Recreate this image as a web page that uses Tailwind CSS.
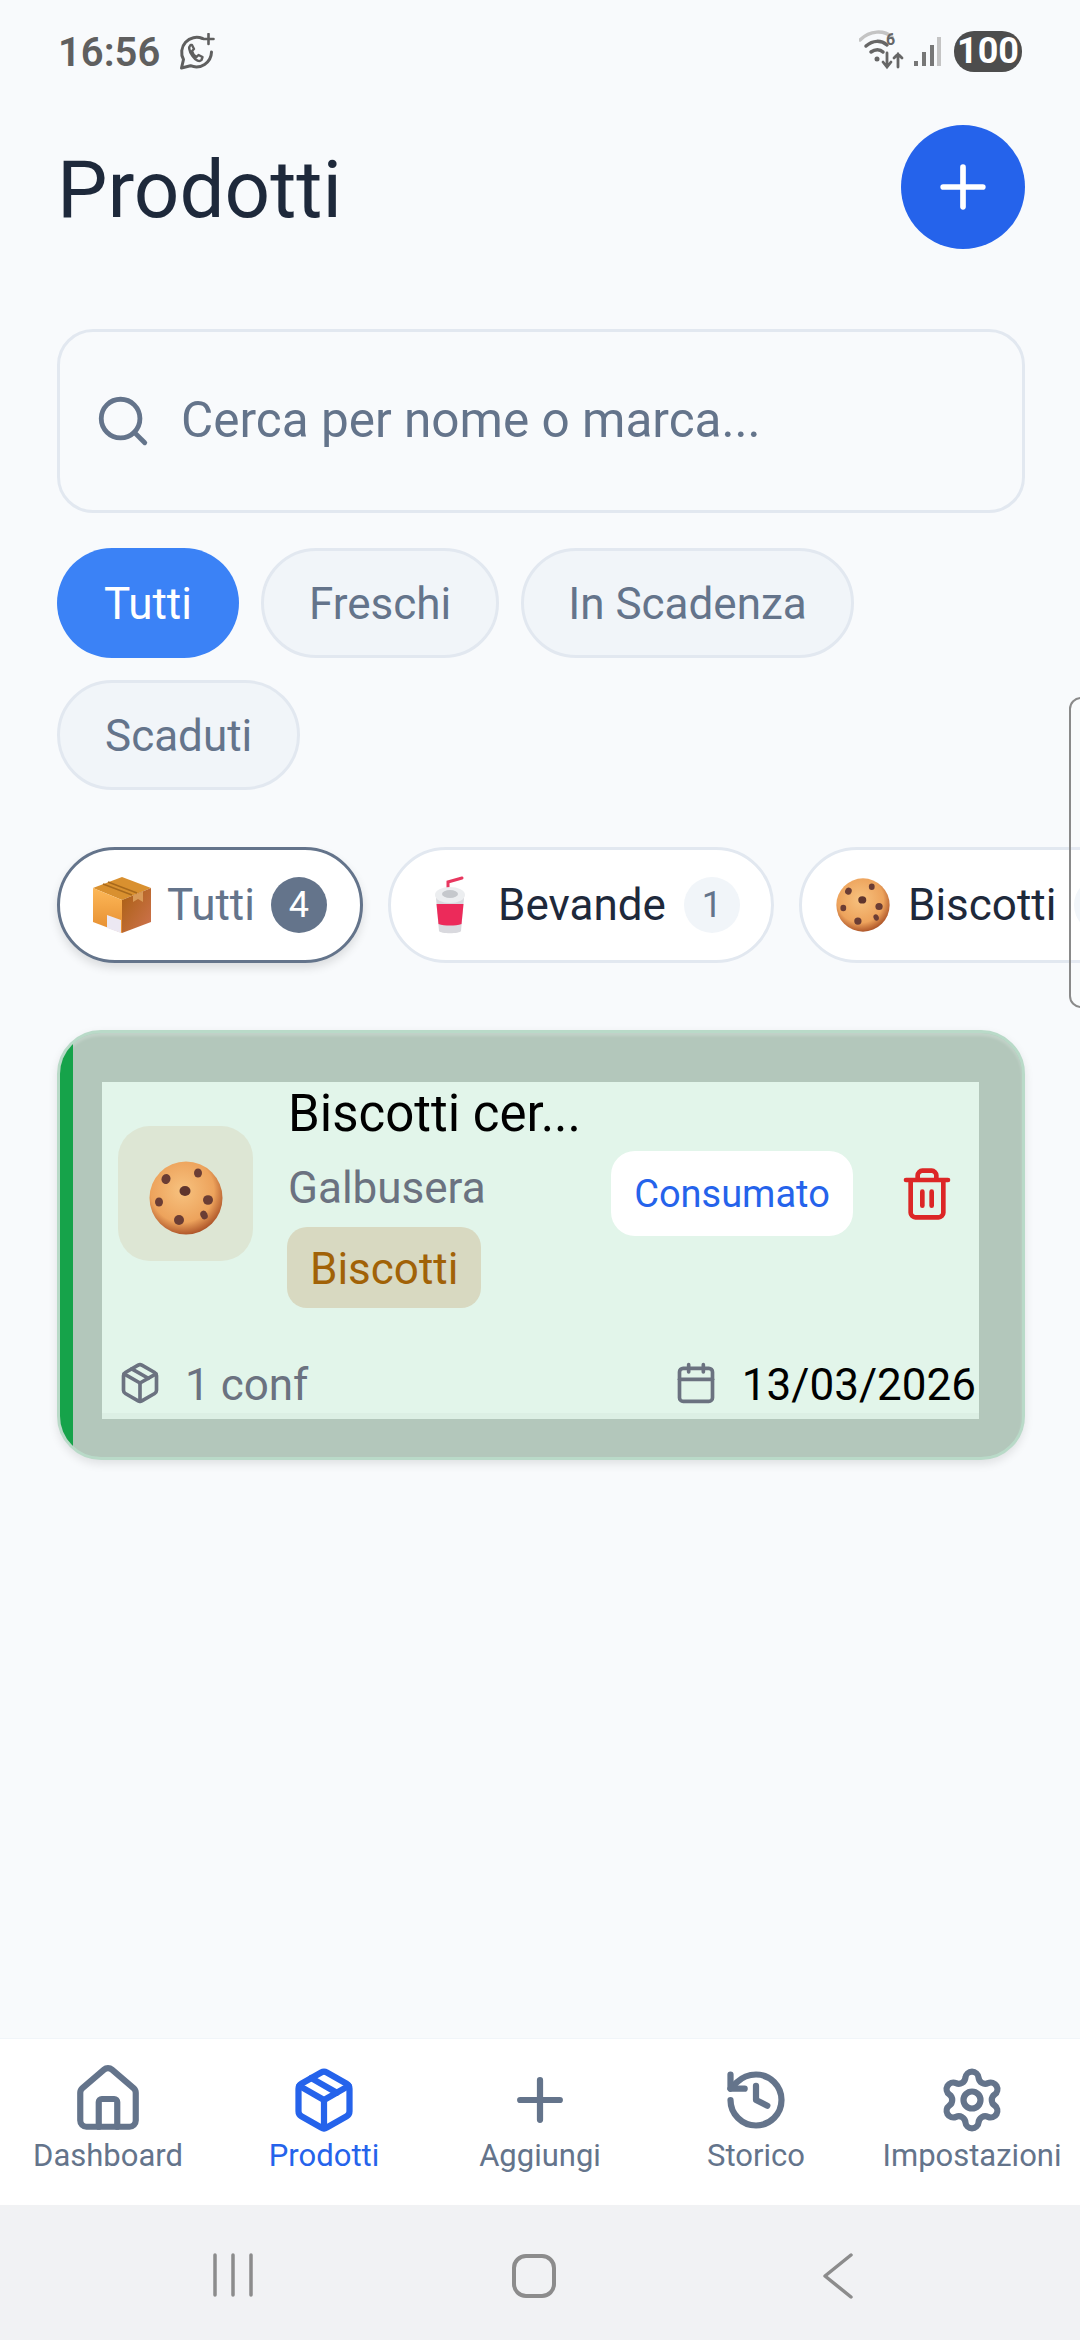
<!DOCTYPE html>
<html lang="it">
<head>
    <meta charset="UTF-8">
    <meta name="viewport" content="width=device-width, initial-scale=1.0">
    <title>Prodotti</title>
    <script src="https://cdn.jsdelivr.net/npm/@tailwindcss/browser@4"></script>
</head>
<body>
    <!-- shared emoji drawings -->
    <svg class="absolute w-0 h-0">
        <defs>
            <radialGradient id="cookieFill" cx="45%" cy="40%" r="62%">
                <stop offset="0%" stop-color="#f7c27f"/>
                <stop offset="70%" stop-color="#eda35c"/>
                <stop offset="100%" stop-color="#a94f25"/>
            </radialGradient>
            <linearGradient id="boxLeft" x1="0" y1="0" x2="0" y2="1">
                <stop offset="0%" stop-color="#fdb858"/>
                <stop offset="100%" stop-color="#e58c2e"/>
            </linearGradient>
            <linearGradient id="boxRight" x1="0" y1="0" x2="1" y2="1">
                <stop offset="0%" stop-color="#a95f10"/>
                <stop offset="100%" stop-color="#cf7350"/>
            </linearGradient>
        </defs>
        <symbol id="cookie" viewBox="0 0 74 74">
            <circle cx="37" cy="37" r="36.5" fill="url(#cookieFill)"/>
            <ellipse cx="17" cy="18" rx="4.5" ry="5" fill="#6b3d34" transform="rotate(20 17 18)"/>
            <ellipse cx="49" cy="12" rx="4" ry="4.5" fill="#6b3d34"/>
            <ellipse cx="36" cy="30" rx="5.5" ry="5" fill="#5f352d"/>
            <ellipse cx="10" cy="41" rx="4" ry="4.5" fill="#6b3d34"/>
            <ellipse cx="59" cy="39" rx="5" ry="4.8" fill="#6b3d34"/>
            <ellipse cx="30" cy="59" rx="5" ry="5" fill="#6b3d34"/>
            <ellipse cx="55" cy="54" rx="3.5" ry="4.5" fill="#6b3d34" transform="rotate(-25 55 54)"/>
        </symbol>
    </svg>

    <div class="relative w-[1080px] h-[2340px] overflow-hidden bg-[#f8fafc] flex flex-col [font-family:Roboto,sans-serif]">

        <!-- status bar -->
        <div class="h-[125px] flex items-start justify-between pl-[58px] pr-[58px] pt-[31px]">
            <div class="flex items-center gap-[18px] h-[42px]">
                <span class="text-[40px] leading-[42px] font-semibold text-[#5f5f5f] mt-[2px]">16:56</span>
                <svg class="w-[38px] h-[38px]" viewBox="0 0 37 38" fill="none" stroke="#5f5f5f" stroke-width="3" stroke-linecap="round" stroke-linejoin="round">
                    <path d="M24 5.5a15 15 0 0 0-19 21L3 35l9-2.3A15.2 15.2 0 0 0 33 19"/>
                    <path d="M12 12c-2 2-1.500 6 2 11s7 6 9 4l1-3-4-2-2 2c-2-1-4-4-4.500-6l2-2-2-4z" stroke-width="2.400"/>
                    <path d="M30 1v10M25 6h10" stroke-width="2.600"/>
                </svg>
            </div>
            <div class="flex items-center h-[41px]">
                <svg class="w-[46px] h-[46px]" viewBox="0 0 46 46" fill="none" stroke-linecap="round">
                    <path d="M1 11C11 1 25 1 33 8" stroke="#c4c4c4" stroke-width="3.500"/>
                    <path d="M7 17c7-6 15-6 21-1" stroke="#666" stroke-width="3.500"/>
                    <path d="M12 23c4-3 9-3 12 0" stroke="#666" stroke-width="3.500"/>
                    <circle cx="18" cy="30" r="2.500" fill="#666"/>
                    <path d="M28 24v13M24 33l4 5 4-5M39 38V25M35 29l4-4 4 4" stroke="#666" stroke-width="2.800"/>
                    <text x="27" y="16" font-size="16" font-weight="700" fill="#666" font-family="Roboto">6</text>
                </svg>
                <svg class="w-[28px] h-[30px] ml-[8px]" viewBox="0 0 28 30" fill="none" stroke-width="4">
                    <path d="M3 24v5" stroke="#777"/>
                    <path d="M11 15v14" stroke="#777"/>
                    <path d="M19 8v21" stroke="#777"/>
                    <path d="M26 0v29" stroke="#c4c4c4"/>
                </svg>
                <div class="ml-[13px] w-[68px] h-[41px] rounded-[20px] bg-[#4d4d4d] text-white text-[36px] leading-[41px] font-bold text-center">100</div>
            </div>
        </div>

        <!-- header -->
        <div class="h-[124px] flex items-center justify-between pl-[57px] pr-[55px]">
            <h1 class="text-[80px] leading-none font-normal text-[#1e293b] mt-[5px]">Prodotti</h1>
            <button class="w-[124px] h-[124px] rounded-full bg-[#2563eb] flex items-center justify-center">
                <svg class="w-[68px] h-[68px]" viewBox="0 0 24 24" fill="none" stroke="#fff" stroke-width="2" stroke-linecap="round"><path d="M5 12h14M12 5v14"/></svg>
            </button>
        </div>

        <!-- search -->
        <div class="mt-[80px] ml-[57px] mr-[55px] h-[184px] border-[3px] border-[#e2e8f0] rounded-[36px] flex items-center pl-[34px] gap-[29px]">
            <svg class="w-[58px] h-[58px]" viewBox="0 0 24 24" fill="none" stroke="#64748b" stroke-width="2" stroke-linecap="round"><circle cx="11" cy="11" r="8"/><path d="m21 21-4.300-4.300"/></svg>
            <span class="text-[49.5px] text-[#64748b] -mt-[1px]">Cerca per nome o marca...</span>
        </div>

        <!-- status filters -->
        <div class="mt-[35px] mx-[57px] flex flex-wrap gap-[22px]">
            <div class="h-[110px] px-[47px] rounded-full bg-[#3b82f6] text-white text-[44px] flex items-center pt-[2px]">Tutti</div>
            <div class="h-[110px] px-[45px] rounded-full bg-[#f1f5f9] border-[3px] border-[#e2e8f0] text-[#64748b] text-[44px] flex items-center pt-[2px]">Freschi</div>
            <div class="h-[110px] px-[44px] rounded-full bg-[#f1f5f9] border-[3px] border-[#e2e8f0] text-[#64748b] text-[44px] flex items-center pt-[2px]">In Scadenza</div>
            <div class="h-[110px] px-[45px] rounded-full bg-[#f1f5f9] border-[3px] border-[#e2e8f0] text-[#64748b] text-[44px] flex items-center pt-[2px]">Scaduti</div>
        </div>

        <!-- categories -->
        <div class="mt-[57px] pl-[57px] flex gap-[25px] overflow-hidden h-[130px]">
            <div class="shrink-0 h-[116px] w-[306px] rounded-full bg-white border-[3px] border-[#64748b] shadow-[0_5px_10px_rgba(0,0,0,0.12)] flex items-center pl-[32px] text-[44px] text-[#64748b]">
                <svg class="w-[60px] h-[56px] shrink-0" viewBox="0 0 60 56">
                    <path d="M30 0 59 11 30 23 1 11z" fill="#d9902f"/>
                    <path d="M11 7 40 18M16 5l29 11" stroke="#a8691c" stroke-width="1.500"/>
                    <path d="M1 11 30 23V56L1 45z" fill="url(#boxLeft)"/>
                    <path d="M59 11 30 23V56L59 45z" fill="url(#boxRight)"/>
                    <path d="M41 18.500l10-4V25l-5-3-5 3z" fill="#d99a57"/>
                    <path d="M15 38l14 5v13l-14-5z" fill="#ece8f2"/>
                </svg>
                <span class="ml-[15px]">Tutti</span>
                <span class="ml-[16px] w-[56px] h-[56px] rounded-full bg-[#64748b] text-white text-[36px] flex items-center justify-center">4</span>
            </div>
            <div class="shrink-0 h-[116px] w-[386px] rounded-full bg-white border-[3px] border-[#e2e8f0] flex items-center pl-[43px] text-[44px] text-[#1e293b]">
                <svg class="w-[32px] h-[58px] shrink-0" viewBox="0 0 32 58">
                    <path d="M14 14V6l14-4" fill="none" stroke="#e8375f" stroke-width="3" stroke-linecap="round"/>
                    <path d="M2 22h28l-3 33c-1 3-21 3-22 0z" fill="#d9d9de"/>
                    <path d="M2.500 28h27l-2 20c-6 2-17 2-23 0z" fill="#ec2a5a"/>
                    <ellipse cx="16" cy="19" rx="15" ry="8" fill="#eceef0"/>
                    <ellipse cx="16" cy="18" rx="8" ry="4" fill="#c5c8cc"/>
                </svg>
                <span class="ml-[32px]">Bevande</span>
                <span class="ml-[18px] w-[56px] h-[56px] rounded-full bg-[#f1f5f9] text-[#64748b] text-[36px] flex items-center justify-center">1</span>
            </div>
            <div class="shrink-0 h-[116px] w-[386px] rounded-full bg-white border-[3px] border-[#e2e8f0] flex items-center pl-[34px] text-[44px] text-[#1e293b]">
                <svg class="w-[54px] h-[54px] shrink-0"><use href="#cookie"/></svg>
                <span class="ml-[18px]">Biscotti</span>
                <span class="ml-[18px] w-[56px] h-[56px] rounded-full bg-[#f1f5f9]"></span>
            </div>
        </div>

        <!-- product card -->
        <div class="mt-[53px] ml-[57px] mr-[55px] h-[430px] rounded-[44px] border-[3px] border-[#b9dac8] bg-[#b3c7bb] overflow-hidden flex shadow-[0_4px_10px_rgba(0,0,0,0.1),inset_0_3px_3px_rgba(255,255,255,0.2)]">
            <div class="w-[13px] shrink-0 bg-[#16a34a]"></div>
            <div class="flex-1 pl-[29px] pr-[43px] pt-[49px]">
                <div class="h-[337px] bg-[#e2f5ea] border-b-[6px] border-[#dcefe4] flex flex-col">
                    <div class="flex items-start pl-[16px] pr-[24px]">
                        <div class="mt-[44px] w-[135px] h-[135px] shrink-0 rounded-[32px] bg-[#dde6d4] flex items-center justify-center">
                            <svg class="w-[74px] h-[74px] mt-[9px]"><use href="#cookie"/></svg>
                        </div>
                        <div class="ml-[35px] flex-1 min-w-0 pt-[1px]">
                            <div class="text-[51px] leading-[62px] text-black">Biscotti cer...</div>
                            <div class="mt-[13px] text-[44px] leading-[60px] text-[#6b7280]">Galbusera</div>
                            <div class="mt-[9px] inline-flex items-center -ml-[1px] h-[81px] px-[23px] pt-[3px] rounded-[20px] bg-[#d8d9c1] text-[44px] text-[#a16207]">Biscotti</div>
                        </div>
                        <button class="mt-[69px] h-[85px] w-[242px] shrink-0 rounded-[24px] bg-white text-[#2563eb] text-[38px] pt-[2px]">Consumato</button>
                        <svg class="mt-[84px] ml-[46px] w-[56px] h-[56px] shrink-0" viewBox="0 0 24 24" fill="none" stroke="#dc2626" stroke-width="2" stroke-linecap="round" stroke-linejoin="round">
                            <path d="M3 6h18M19 6v14c0 1-1 2-2 2H7c-1 0-2-1-2-2V6M8 6V4c0-1 1-2 2-2h4c1 0 2 1 2 2v2M10 11v6M14 11v6"/>
                        </svg>
                    </div>
                    <div class="mt-auto h-[60px] flex items-center justify-between pl-[16px] pr-[3px] text-[44px]">
                        <div class="flex items-center gap-[23px] text-[#6b7280]">
                            <svg class="w-[44px] h-[44px]" viewBox="0 0 24 24" fill="none" stroke="#6b7280" stroke-width="2" stroke-linecap="round" stroke-linejoin="round">
                                <path d="M11 21.730a2 2 0 0 0 2 0l7-4A2 2 0 0 0 21 16V8a2 2 0 0 0-1-1.730l-7-4a2 2 0 0 0-2 0l-7 4A2 2 0 0 0 3 8v8a2 2 0 0 0 1 1.730z"/>
                                <path d="M12 22V12"/><polyline points="3.290 7 12 12 20.710 7"/><path d="m7.500 4.270 9 5.150"/>
                            </svg>
                            <span class="mt-[3px]">1 conf</span>
                        </div>
                        <div class="flex items-center gap-[24px] text-black">
                            <svg class="w-[44px] h-[44px]" viewBox="0 0 24 24" fill="none" stroke="#6b7280" stroke-width="2" stroke-linecap="round" stroke-linejoin="round">
                                <path d="M8 2v4M16 2v4"/><rect width="18" height="18" x="3" y="4" rx="2"/><path d="M3 10h18"/>
                            </svg>
                            <span class="mt-[3px]">13/03/2026</span>
                        </div>
                    </div>
                </div>
            </div>
        </div>

        <!-- tab bar -->
        <div class="mt-auto h-[167px] bg-white border-t border-[#f1f5f9] grid grid-cols-5 text-[#64748b] text-[31px]">
            <div class="flex flex-col items-center pt-[24px]">
                <svg class="w-[74px] h-[74px] -mt-[1px]" viewBox="0 0 24 24" fill="none" stroke="#64748b" stroke-width="2" stroke-linecap="round" stroke-linejoin="round">
                    <path d="M15 21v-8a1 1 0 0 0-1-1h-4a1 1 0 0 0-1 1v8"/>
                    <path d="M3 10a2 2 0 0 1 .709-1.528l7-5.999a2 2 0 0 1 2.582 0l7 5.999A2 2 0 0 1 21 10v9a2 2 0 0 1-2 2H5a2 2 0 0 1-2-2z"/>
                </svg>
                <span class="leading-[36px] mt-[2px]">Dashboard</span>
            </div>
            <div class="flex flex-col items-center pt-[27px] text-[#2563eb]">
                <svg class="w-[68px] h-[68px]" viewBox="0 0 24 24" fill="none" stroke="#2563eb" stroke-width="2.200" stroke-linecap="round" stroke-linejoin="round">
                    <path d="M11 21.730a2 2 0 0 0 2 0l7-4A2 2 0 0 0 21 16V8a2 2 0 0 0-1-1.730l-7-4a2 2 0 0 0-2 0l-7 4A2 2 0 0 0 3 8v8a2 2 0 0 0 1 1.730z"/>
                    <path d="M12 22V12"/><polyline points="3.290 7 12 12 20.710 7"/><path d="m7.500 4.270 9 5.150"/>
                </svg>
                <span class="leading-[36px] mt-[4px]">Prodotti</span>
            </div>
            <div class="flex flex-col items-center pt-[27px]">
                <svg class="w-[68px] h-[68px]" viewBox="0 0 24 24" fill="none" stroke="#64748b" stroke-width="2.200" stroke-linecap="round"><path d="M5 12h14M12 5v14"/></svg>
                <span class="leading-[36px] mt-[4px]">Aggiungi</span>
            </div>
            <div class="flex flex-col items-center pt-[27px]">
                <svg class="w-[68px] h-[68px]" viewBox="0 0 24 24" fill="none" stroke="#64748b" stroke-width="2.200" stroke-linecap="round" stroke-linejoin="round">
                    <path d="M3 12a9 9 0 1 0 9-9 9.750 9.750 0 0 0-6.740 2.740L3 8"/><path d="M3 3v5h5"/><path d="M12 7v5l4 2"/>
                </svg>
                <span class="leading-[36px] mt-[4px]">Storico</span>
            </div>
            <div class="flex flex-col items-center pt-[27px]">
                <svg class="w-[68px] h-[68px]" viewBox="0 0 24 24" fill="none" stroke="#64748b" stroke-width="2.200" stroke-linecap="round" stroke-linejoin="round">
                    <path d="M9.671 4.136a2.340 2.340 0 0 1 4.659 0 2.340 2.340 0 0 0 3.319 1.915 2.340 2.340 0 0 1 2.330 4.033 2.340 2.340 0 0 0 0 3.831 2.340 2.340 0 0 1-2.330 4.033 2.340 2.340 0 0 0-3.319 1.915 2.340 2.340 0 0 1-4.659 0 2.340 2.340 0 0 0-3.320-1.915 2.340 2.340 0 0 1-2.330-4.033 2.340 2.340 0 0 0 0-3.831A2.340 2.340 0 0 1 6.350 6.051a2.340 2.340 0 0 0 3.320-1.915"/>
                    <circle cx="12" cy="12" r="3"/>
                </svg>
                <span class="leading-[36px] mt-[4px]">Impostazioni</span>
            </div>
        </div>

        <!-- android navigation -->
        <div class="h-[135px] bg-[#f1f2f4] flex items-start pt-[48px] relative">
            <svg class="ml-[211px] w-[44px] h-[44px]" viewBox="0 0 44 44" stroke="#8c8c8c" stroke-width="3.500" stroke-linecap="round"><path d="M4 2v40M22 2v40M40 2v40"/></svg>
            <svg class="ml-[256px] w-[46px] h-[46px]" viewBox="0 0 46 46" fill="none" stroke="#8c8c8c" stroke-width="4"><rect x="3" y="3" width="40" height="40" rx="12"/></svg>
            <svg class="ml-[265px] w-[32px] h-[46px]" viewBox="0 0 32 46" fill="none" stroke="#8c8c8c" stroke-width="3.500" stroke-linecap="round" stroke-linejoin="round"><path d="M29 2 3 23l26 21"/></svg>
        </div>

        <!-- edge panel handle -->
        <div class="absolute left-[1069px] top-[697px] w-[30px] h-[311px] rounded-[12px] border-[2px] border-[#8a8a8a] bg-white/10"></div>
    </div>
</body>
</html>
